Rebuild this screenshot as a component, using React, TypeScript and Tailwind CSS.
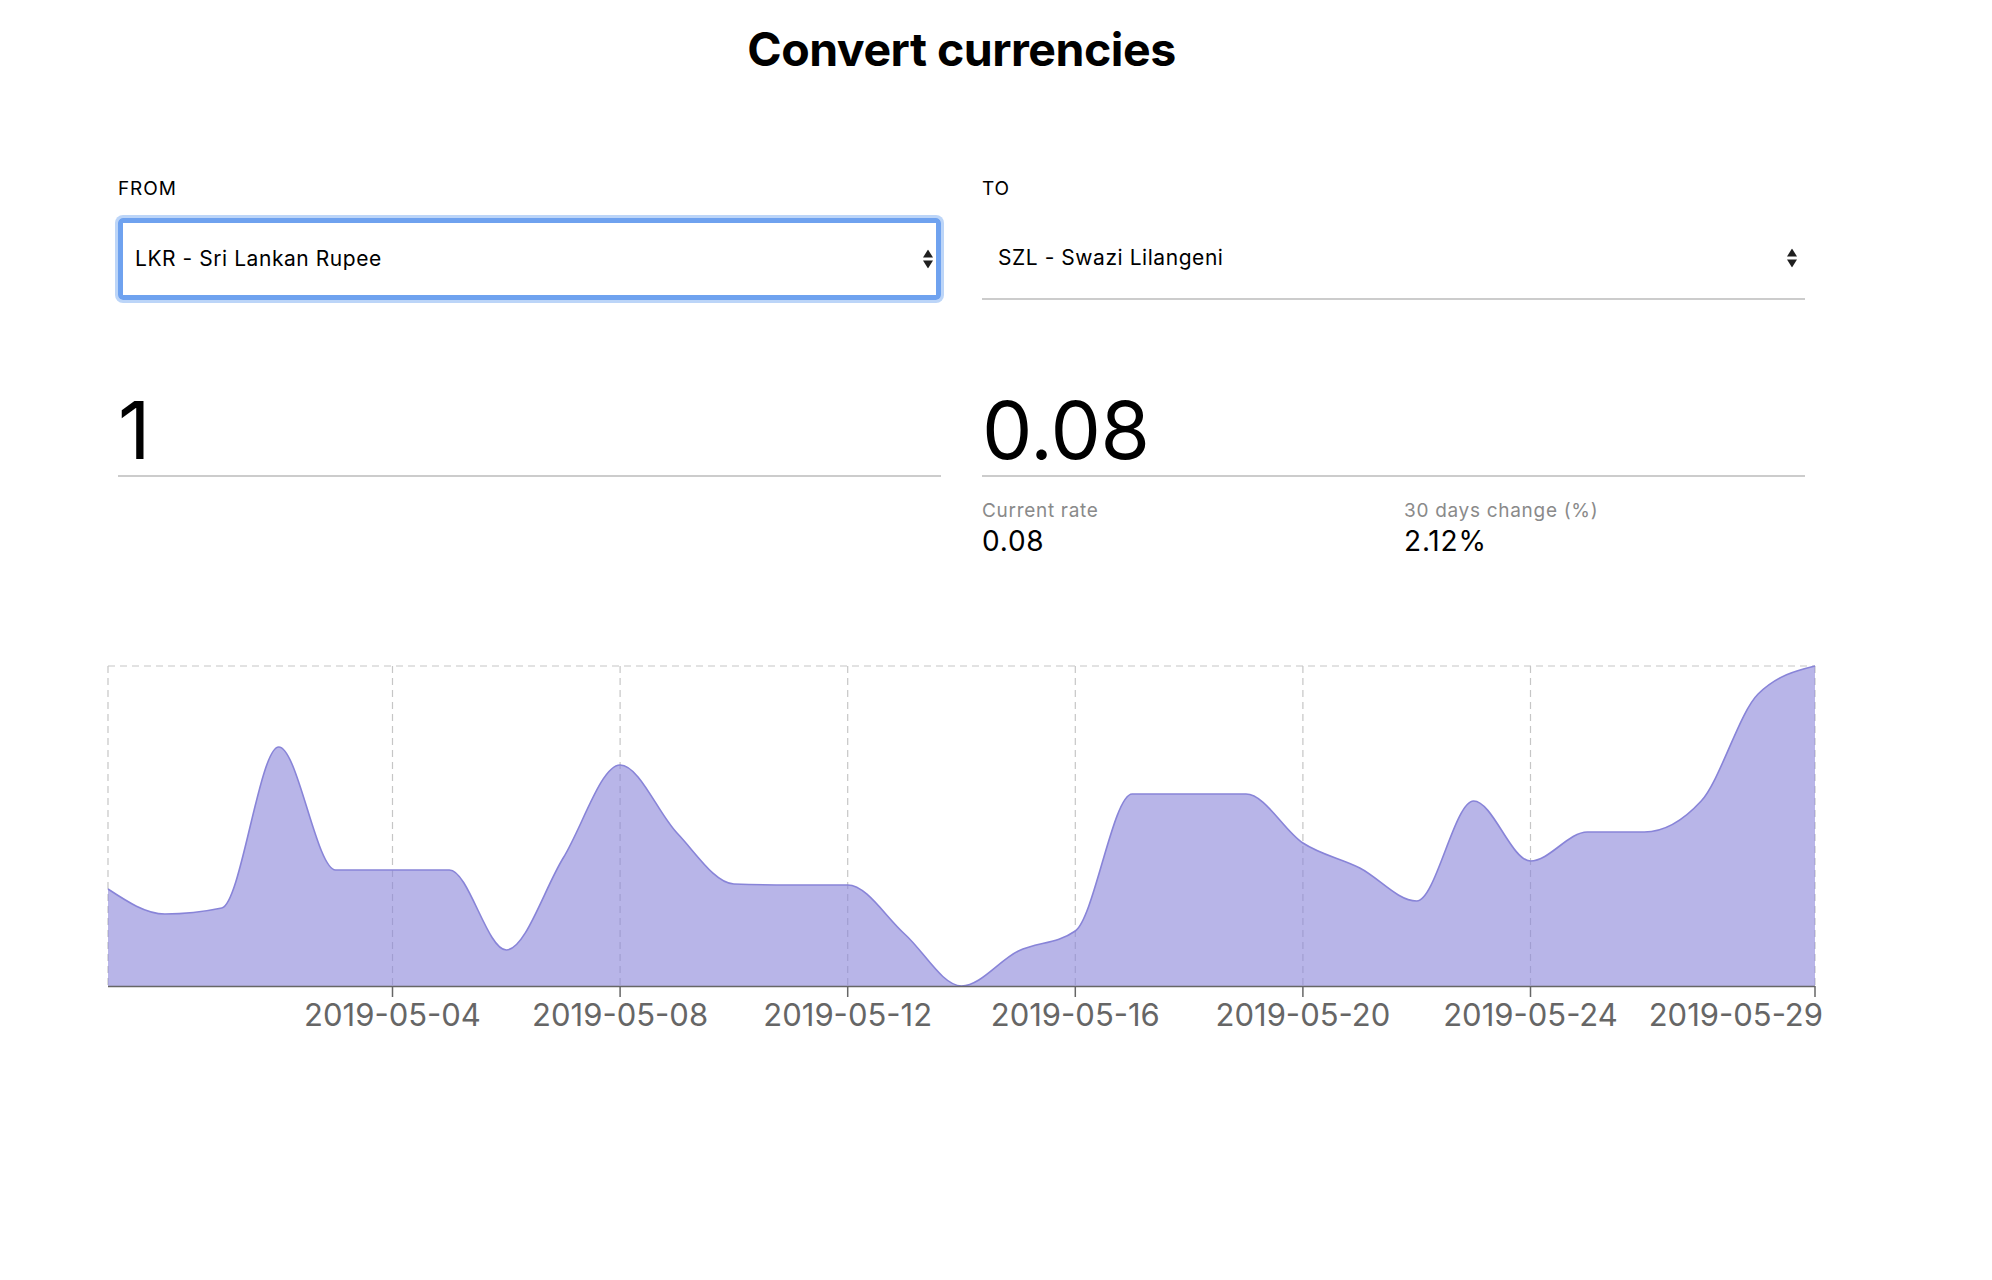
import React from 'react';

// page y of each daily point (2019-04-29 .. 2019-05-29), read off the chart
const rates = [
  888, 913, 907, 746, 869, 869, 869, 949, 857, 764, 832, 883, 884, 884, 933, 985,
  950, 930, 793, 793, 793, 842, 867, 900, 800, 860, 831, 831, 800, 693, 665,
];

const X0 = 10;
const STEP = 56.9;
const TOP = 10;
const BOTTOM = 330;

const ticks = [
  { i: 5, label: '2019-05-04' },
  { i: 9, label: '2019-05-08' },
  { i: 13, label: '2019-05-12' },
  { i: 17, label: '2019-05-16' },
  { i: 21, label: '2019-05-20' },
  { i: 25, label: '2019-05-24' },
  { i: 30, label: '2019-05-29' },
];

const sign = (x: number) => (x < 0 ? -1 : 1);

function monotonePath(pts: [number, number][]) {
  const n = pts.length;
  const t: number[] = new Array(n).fill(0);
  for (let i = 1; i < n - 1; i++) {
    const [x0, y0] = pts[i - 1];
    const [x1, y1] = pts[i];
    const [x2, y2] = pts[i + 1];
    const h0 = x1 - x0;
    const h1 = x2 - x1;
    const s0 = (y1 - y0) / h0;
    const s1 = (y2 - y1) / h1;
    const p = (s0 * h1 + s1 * h0) / (h0 + h1);
    t[i] = (sign(s0) + sign(s1)) * Math.min(Math.abs(s0), Math.abs(s1), 0.5 * Math.abs(p)) || 0;
  }
  const sFirst = (pts[1][1] - pts[0][1]) / (pts[1][0] - pts[0][0]);
  t[0] = (3 * sFirst - t[1]) / 2;
  const sLast = (pts[n - 1][1] - pts[n - 2][1]) / (pts[n - 1][0] - pts[n - 2][0]);
  t[n - 1] = (3 * sLast - t[n - 2]) / 2;

  let d = `M${pts[0][0]},${pts[0][1]}`;
  for (let i = 0; i < n - 1; i++) {
    const [x0, y0] = pts[i];
    const [x1, y1] = pts[i + 1];
    const dx = (x1 - x0) / 3;
    d += `C${x0 + dx},${y0 + dx * t[i]},${x1 - dx},${y1 - dx * t[i + 1]},${x1},${y1}`;
  }
  return d;
}

function SelectArrows({ className }: { className: string }) {
  return (
    <svg width="10" height="19" viewBox="0 0 10 19" className={`absolute top-1/2 -translate-y-1/2 ${className}`}>
      <path d="M5 0 L10 8 L0 8 Z" fill="#1f1f1f" />
      <path d="M0 11 L10 11 L5 19 Z" fill="#1f1f1f" />
    </svg>
  );
}

function RateChart() {
  const pts: [number, number][] = rates.map((y, i) => [X0 + i * STEP, y - 655]);
  const line = monotonePath(pts);
  const xEnd = X0 + 30 * STEP;
  const area = `${line}L${xEnd},${BOTTOM}L${X0},${BOTTOM}Z`;
  const gridX = [0, ...ticks.map((t) => t.i)];

  return (
    <svg width="1740" height="400" className="block -ml-[20px] mt-[102px]">
      {/* grid */}
      <g stroke="#c6c6c6" strokeDasharray="7 5" strokeWidth="1.2">
        <line x1={X0} y1={TOP} x2={xEnd} y2={TOP} />
        {gridX.map((i) => (
          <line key={i} x1={X0 + i * STEP} y1={TOP} x2={X0 + i * STEP} y2={BOTTOM} />
        ))}
      </g>
      {/* area */}
      <path d={area} fill="#8884d8" fillOpacity="0.6" />
      <path d={line} fill="none" stroke="#8884d8" strokeWidth="1.6" />
      {/* axis */}
      <line x1={X0} y1={BOTTOM + 0.5} x2={xEnd} y2={BOTTOM + 0.5} stroke="#666" strokeWidth="1.5" />
      {ticks.map((t) => {
        const x = X0 + t.i * STEP;
        const last = t.i === 30;
        return (
          <g key={t.label}>
            <line x1={x} y1={BOTTOM} x2={x} y2={BOTTOM + 11} stroke="#666" strokeWidth="1.5" />
            <text
              x={last ? x + 8 : x}
              y={370}
              textAnchor={last ? 'end' : 'middle'}
              fill="#666"
              fontSize="31"
              fontFamily="Inter, sans-serif"
            >
              {t.label}
            </text>
          </g>
        );
      })}
    </svg>
  );
}

export default function App() {
  return (
    <div className="min-h-screen bg-white font-['Inter',_sans-serif] text-black">
      <div className="ml-[118px] w-[1687px] pt-[25px]">
        <h1 className="text-center text-[46.5px] leading-[48px] font-bold tracking-[-0.5px]">Convert currencies</h1>

        <div className="mt-[107px] grid grid-cols-[823px_823px] gap-x-[41px]">
          {/* From */}
          <div>
            <div className="text-[19px] leading-[18px] tracking-[0.9px]">FROM</div>
            <div className="relative mt-[20px] flex h-[82px] items-center rounded-[5px] border-[5px] border-[#6fa2ef] pl-[12px] shadow-[0_0_0_3px_#bcd5f8]">
              <span className="text-[21px] leading-[20px] tracking-[0.55px]">LKR - Sri Lankan Rupee</span>
              <SelectArrows className="right-[3px]" />
            </div>
            <div className="mt-[90px] border-b-2 border-[#cccccc] pb-[5px] text-[80px] leading-[80px]">1</div>
          </div>

          {/* To */}
          <div>
            <div className="text-[19px] leading-[18px] tracking-[0.9px]">TO</div>
            <div className="relative mt-[20px] flex h-[82px] items-center border-b-2 border-[#cccccc] pl-[16px]">
              <span className="text-[21px] leading-[20px] tracking-[0.55px]">SZL - Swazi Lilangeni</span>
              <SelectArrows className="right-[8px]" />
            </div>
            <div className="mt-[90px] border-b-2 border-[#cccccc] pb-[5px] text-[80px] leading-[80px] tracking-[-0.5px]">0.08</div>
            <div className="mt-[25px] grid grid-cols-2 gap-x-[21px]">
              <div>
                <div className="text-[19px] leading-[18px] tracking-[0.7px] text-[#8a8a8a]">Current rate</div>
                <div className="mt-[8px] text-[28px] leading-[26px] tracking-[0.8px]">0.08</div>
              </div>
              <div>
                <div className="text-[19px] leading-[18px] tracking-[0.7px] text-[#8a8a8a]">30 days change (%)</div>
                <div className="mt-[8px] text-[28px] leading-[26px] tracking-[0.8px]">2.12%</div>
              </div>
            </div>
          </div>
        </div>

        <RateChart />
      </div>
    </div>
  );
}
